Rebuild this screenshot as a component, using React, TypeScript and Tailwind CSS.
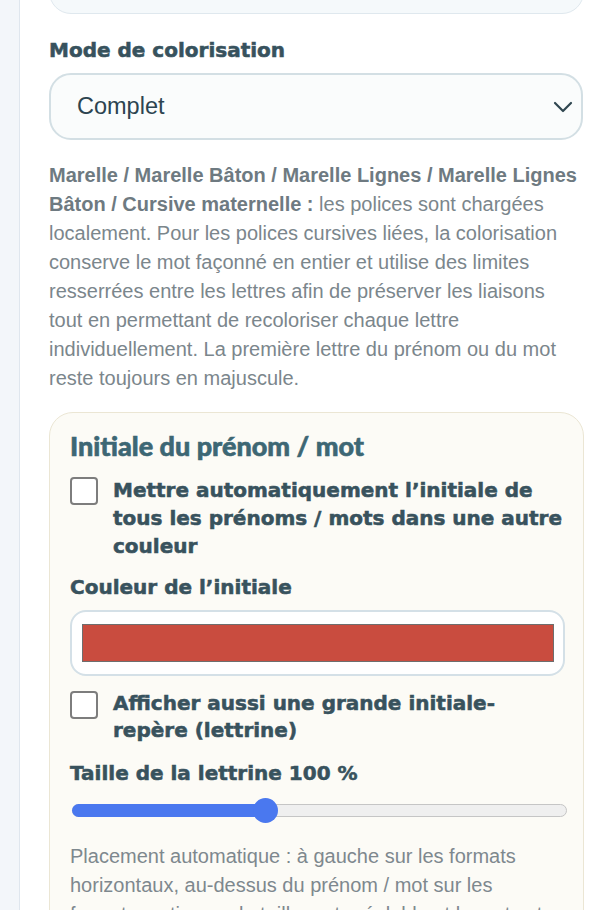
import React from "react";

const labelFont = "font-['DejaVu_Sans',sans-serif] font-bold [-webkit-text-stroke:0.55px_currentColor]";

function Checkbox() {
  return (
    <span className="mt-[1px] block h-[28px] w-[28px] shrink-0 rounded-[4px] border-2 border-[#7d7d7d] bg-white" />
  );
}

export default function App() {
  return (
    <div className="flex min-h-screen bg-[#f3f6fa] font-['Liberation_Sans',Arial,sans-serif]">
      <div className="w-[19px] shrink-0" />
      <div className="flex-1 overflow-hidden border-l border-[#dfe6ee] bg-white pl-[29px] pr-[10px] pb-10">
        {/* previous card tail */}
        <div className="-mt-[40px] h-[54px] rounded-[22px] border border-[#dfe8ee] bg-[#f5f9fb]" />

        <div className={`mt-[24px] text-[20px] leading-[24px] text-[#37525d] ${labelFont}`}>
          Mode de colorisation
        </div>

        <div className="mt-[11px] flex h-[67px] w-[534px] items-center justify-between rounded-[22px] border-2 border-[#d3dfe4] bg-[#fafcfc] pl-[26px] pr-[8px]">
          <span className="font-['Liberation_Sans',Arial,sans-serif] text-[23.5px] text-[#2c4450]">Complet</span>
          <svg width="20" height="12" viewBox="0 0 20 12">
            <path d="M2 2 L10 10 L18 2" fill="none" stroke="#2f4650" strokeWidth="2.2" strokeLinecap="round" strokeLinejoin="round" />
          </svg>
        </div>

        <p className="mt-[21px] w-[534px] font-['Liberation_Sans',Arial,sans-serif] text-[20px] leading-[29px] text-[#7b868c]">
          <b className="font-bold text-[#6e7a81]">
            Marelle / Marelle Bâton / Marelle Lignes / Marelle Lignes Bâton / Cursive maternelle :
          </b>{" "}
          les polices sont chargées localement. Pour les polices cursives liées, la colorisation conserve le mot façonné en entier et utilise des limites resserrées entre les lettres afin de préserver les liaisons tout en permettant de recoloriser chaque lettre individuellement. La première lettre du prénom ou du mot reste toujours en majuscule.
        </p>

        <div className="mt-[19px] w-[535px] rounded-[24px] border border-[#ebe6d4] bg-[#fcfbf6] px-[20px] pt-[17px] pb-[30px]">
          <h2 className="font-['Lato',sans-serif] text-[27px] font-black leading-[32px] text-[#3d6774] [-webkit-text-stroke:0.6px_currentColor]">
            Initiale du prénom / mot
          </h2>

          <div className="mt-[14px] flex items-start gap-[15px]">
            <Checkbox />
            <span className={`text-[20px] leading-[28px] text-[#38525d] ${labelFont}`}>
              Mettre automatiquement l’initiale de tous les prénoms / mots dans une autre couleur
            </span>
          </div>

          <div className={`mt-[13px] text-[20px] leading-[28px] text-[#38525d] ${labelFont}`}>
            Couleur de l’initiale
          </div>

          <div className="mt-[9px] w-[495px] rounded-[16px] border-2 border-[#d4e0e7] bg-white py-[12px] pl-[10px] pr-[9px]">
            <div className="h-[38px] border border-[#6e6e6e] bg-[#c94c3f]" />
          </div>

          <div className="mt-[14px] flex items-start gap-[15px]">
            <Checkbox />
            <span className={`text-[20px] leading-[27px] text-[#38525d] ${labelFont}`}>
              Afficher aussi une grande initiale-repère (lettrine)
            </span>
          </div>

          <div className={`mt-[15px] text-[20px] leading-[28px] text-[#38525d] ${labelFont}`}>
            Taille de la lettrine 100 %
          </div>

          <div className="relative mt-[11px] h-[25px] w-[497px]">
            <div className="absolute left-[2px] right-0 top-[6px] h-[13px] rounded-full border border-[#c5c5c5] bg-[#efefef]" />
            <div className="absolute left-[2px] top-[6px] h-[13px] w-[195px] rounded-full bg-[#4a78ef]" />
            <div className="absolute left-[183px] top-0 h-[25px] w-[25px] rounded-full bg-[#4a78ef]" />
          </div>

          <p className="mt-[19px] font-['Liberation_Sans',Arial,sans-serif] text-[20px] leading-[29px] text-[#7e888e]">
            Placement automatique : à gauche sur les formats horizontaux, au-dessus du prénom / mot sur les formats verticaux ; la taille reste réglable et le mot est recalé automatiquement.
          </p>
        </div>
      </div>
    </div>
  );
}
